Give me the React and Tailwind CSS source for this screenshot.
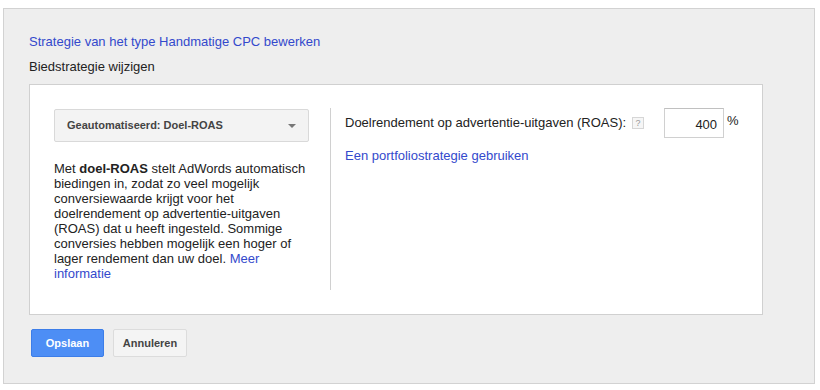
import React from 'react';

const font = { fontFamily: '"Liberation Sans", Arial, sans-serif' };

const Caret = () => (
  <svg width="8" height="4" viewBox="0 0 8 4" className="shrink-0">
    <path d="M0 0 L8 0 L4 4 Z" fill="#777" />
  </svg>
);

export default function App() {
  return (
    <div className="w-[820px] h-[390px] bg-white pt-[8px] pl-[3px] text-[#222]" style={font}>
      <div className="w-[812px] h-[376px] bg-[#eeeeee] border border-[#d2d2d2] px-[25px] pt-[25px]">
        {/* Header */}
        <a className="block text-[13px] leading-[16px] text-[#3349cc] cursor-pointer">
          Strategie van het type Handmatige CPC bewerken
        </a>
        <div className="mt-[9px] text-[13px] leading-[16px] text-[#222]">Biedstrategie wijzigen</div>

        {/* Card */}
        <div className="mt-[9px] w-[734px] h-[231px] bg-white border border-[#d0d0d0] pl-[24px] pt-[24px] flex items-start">
          {/* Left column */}
          <div className="w-[255px] mr-[21px] shrink-0">
            <button
              type="button"
              className="w-[255px] h-[33px] flex items-center justify-between pl-[12px] pr-[12px] bg-[#f3f3f3] border border-[#d9d9d9] rounded-[2px] text-[11px] font-bold text-[#444]"
            >
              <span>Geautomatiseerd: Doel-ROAS</span>
              <Caret />
            </button>
            <p className="mt-[19px] text-[13px] leading-[15px] text-[#222]">
              Met <b>doel-ROAS</b> stelt AdWords automatisch biedingen in, zodat zo veel mogelijk
              conversiewaarde krijgt voor het doelrendement op advertentie-uitgaven (ROAS) dat u
              heeft ingesteld. Sommige conversies hebben mogelijk een hoger of lager rendement dan
              uw doel. <a className="text-[#3349cc] cursor-pointer">Meer informatie</a>
            </p>
          </div>

          {/* Right column */}
          <div className="-mt-[1px] h-[182px] border-l border-[#d0d0d0] pl-[14px]">
            <div className="flex items-center h-[30px]">
              <span className="text-[13px] leading-[16px]">Doelrendement op advertentie-uitgaven (ROAS):</span>
              <span className="ml-[6px] w-[12px] h-[12px] border border-[#d6d6d6] bg-[#f6f6f6] flex items-center justify-center text-[9px] leading-none text-[#999]">
                ?
              </span>
              <div className="ml-[20px] w-[60px] h-[30px] border border-[#d0d0d0] border-t-[#c0c0c0] bg-white flex items-center justify-end pr-[6px] pt-[4px] text-[13px]">
                400
              </div>
              <span className="ml-[3px] self-start mt-[5px] text-[13px] leading-[16px]">%</span>
            </div>
            <a className="block mt-[10px] text-[13px] leading-[16px] text-[#3349cc] cursor-pointer">
              Een portfoliostrategie gebruiken
            </a>
          </div>
        </div>

        {/* Buttons */}
        <div className="mt-[14px] ml-[2px] flex gap-[9px]">
          <button
            type="button"
            className="w-[73px] h-[28px] bg-[#4d8ef5] border border-[#3c7de8] rounded-[2px] text-[11px] font-bold text-white"
          >
            Opslaan
          </button>
          <button
            type="button"
            className="w-[74px] h-[28px] bg-[#f4f4f4] border border-[#dcdcdc] rounded-[2px] text-[11px] font-bold text-[#444]"
          >
            Annuleren
          </button>
        </div>
      </div>
    </div>
  );
}
